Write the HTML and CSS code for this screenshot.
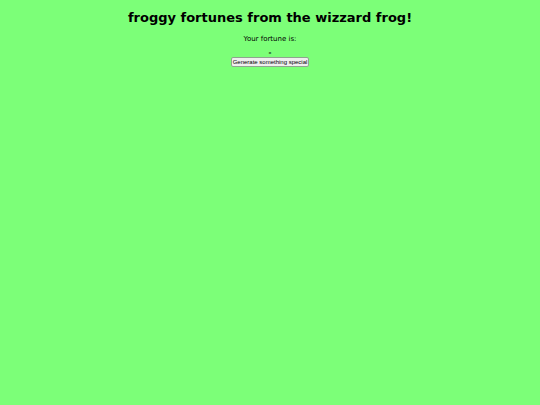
FILE: index.html
```html
<!DOCTYPE html>
<html lang="en">
<head>
    <meta charset="UTF-8">
    <meta name="viewport" content="width=device-width, initial-scale=1.0">
    <title>froggy fortunes</title>

    <link rel="stylesheet" href="styles.css">
</head>
<body>

    <h1>froggy fortunes from the wizzard frog!</h1>

    <p>Your fortune is:</p>

    <div id="fortune">-</div>

    <button id="generate" type="button">Generate something special</button>

</body>
</html>
```
FILE: styles.css
```css
body{
    background: #7cff78;
    font-family: Verdana, "DejaVu Sans", sans-serif;
    font-size: 7px;
    text-align: center;
    color: black;
    margin: 8px;
}

h1{
    font-size: 13px;
    line-height: 20px;
    margin: 0;
}

p{
    line-height: 8px;
    margin: 7px 0;
}

#fortune{
    font-weight: bold;
    line-height: 7px;
}

#generate{
    display: block;
    font-family: "Liberation Sans", Arial, sans-serif;
    font-size: 6px;
    line-height: 8px;
    color: black;
    background: #efefef;
    border: 1px solid #8fa58f;
    border-radius: 2px;
    padding: 0 1px;
    margin: 0 auto;
}
```
